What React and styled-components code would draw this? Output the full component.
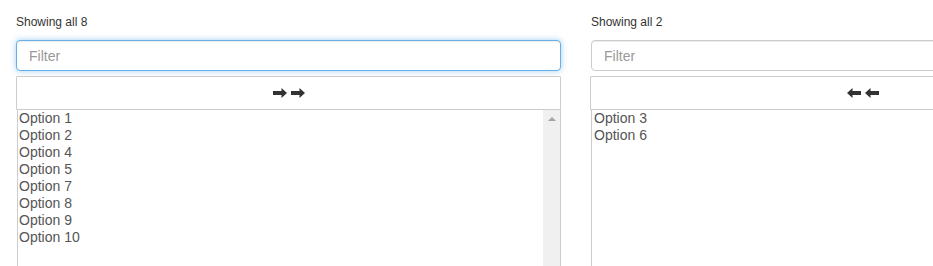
import React from 'react';
import styled, { createGlobalStyle } from 'styled-components';

const GlobalStyle = createGlobalStyle`
  html, body {
    margin: 0;
    padding: 0;
    background: #fff;
    overflow: hidden;
  }
  body {
    font-family: "Liberation Sans", Arial, Helvetica, sans-serif;
    color: #333;
  }
`;

// the page is wider than the window, so it is clipped like the original
const Viewport = styled.div`
  width: 933px;
  height: 266px;
  overflow: hidden;
`;

const Row = styled.div`
  display: grid;
  grid-template-columns: 545px 545px;
  column-gap: 30px;
  padding: 14px 0 0 16px;
  width: 1200px;
`;

const Column = styled.div`
  display: flex;
  flex-direction: column;
`;

const Info = styled.div`
  font-size: 12px;
  line-height: 17px;
  color: #333;
  height: 17px;
  margin-bottom: 9px;
`;

const Filter = styled.input`
  box-sizing: border-box;
  height: 31px;
  width: 100%;
  margin: 0;
  padding: 0 12px;
  font-family: inherit;
  font-size: 14px;
  color: #555;
  border-radius: 4px;
  border: 1px solid ${(p) => (p.$focused ? '#66afe9' : '#ccc')};
  box-shadow: ${(p) =>
    p.$focused
      ? 'inset 0 1px 1px rgba(0,0,0,.075), 0 0 6px rgba(102,175,233,.6)'
      : 'inset 0 1px 1px rgba(0,0,0,.075)'};
  outline: none;
  &::placeholder {
    color: #999;
  }
`;

const MoveAll = styled.button`
  box-sizing: border-box;
  margin: 5px 0 0 ${(p) => (p.$shift ? '-1px' : '0')};
  width: ${(p) => (p.$shift ? '546px' : '545px')};
  height: 34px;
  padding: 0;
  background: #fff;
  border: 1px solid #ccc;
  border-radius: 1px 1px 0 0;
  display: flex;
  align-items: center;
  justify-content: center;
  gap: 4px;
  cursor: pointer;
`;

const SelectBox = styled.div`
  box-sizing: border-box;
  margin-left: ${(p) => (p.$shift ? '0' : '1px')};
  height: 190px;
  border: 1px solid #ccc;
  border-top: none;
  display: flex;
  background: #fff;
`;

const Options = styled.div`
  flex: 1;
  padding-left: ${(p) => (p.$shift ? '2px' : '1px')};
`;

const Option = styled.div`
  font-size: 14px;
  line-height: 17px;
  color: #555;
  white-space: nowrap;
`;

const Track = styled.div`
  width: 17px;
  background: #f0f0f0;
  display: flex;
  justify-content: center;
  padding-top: 7px;
  box-sizing: border-box;
`;

const UpArrow = styled.div`
  width: 0;
  height: 0;
  border-left: 4px solid transparent;
  border-right: 4px solid transparent;
  border-bottom: 4px solid #a3a3a3;
`;

const Arrow = ({ dir }) => (
  <svg width="14" height="10" viewBox="0 0 14 10">
    <path
      d={
        dir === 'right'
          ? 'M0 3h8.5V0L14 5l-5.5 5V7H0z'
          : 'M14 3H5.5V0L0 5l5.5 5V7H14z'
      }
      fill="#333"
    />
  </svg>
);

const Panel = ({ count, focused, dir, items, scroll, shift }) => (
  <Column>
    <Info>Showing all {count}</Info>
    <Filter placeholder="Filter" $focused={focused} />
    <MoveAll $shift={shift}>
      <Arrow dir={dir} />
      <Arrow dir={dir} />
    </MoveAll>
    <SelectBox $shift={shift}>
      <Options $shift={shift}>
        {items.map((it) => (
          <Option key={it}>{it}</Option>
        ))}
      </Options>
      {scroll && (
        <Track>
          <UpArrow />
        </Track>
      )}
    </SelectBox>
  </Column>
);

const App = () => (
  <Viewport>
    <GlobalStyle />
    <Row>
      <Panel
        count={8}
        focused
        dir="right"
        scroll
        items={[
          'Option 1',
          'Option 2',
          'Option 4',
          'Option 5',
          'Option 7',
          'Option 8',
          'Option 9',
          'Option 10',
        ]}
      />
      <Panel count={2} dir="left" shift items={['Option 3', 'Option 6']} />
    </Row>
  </Viewport>
);

export default App;
